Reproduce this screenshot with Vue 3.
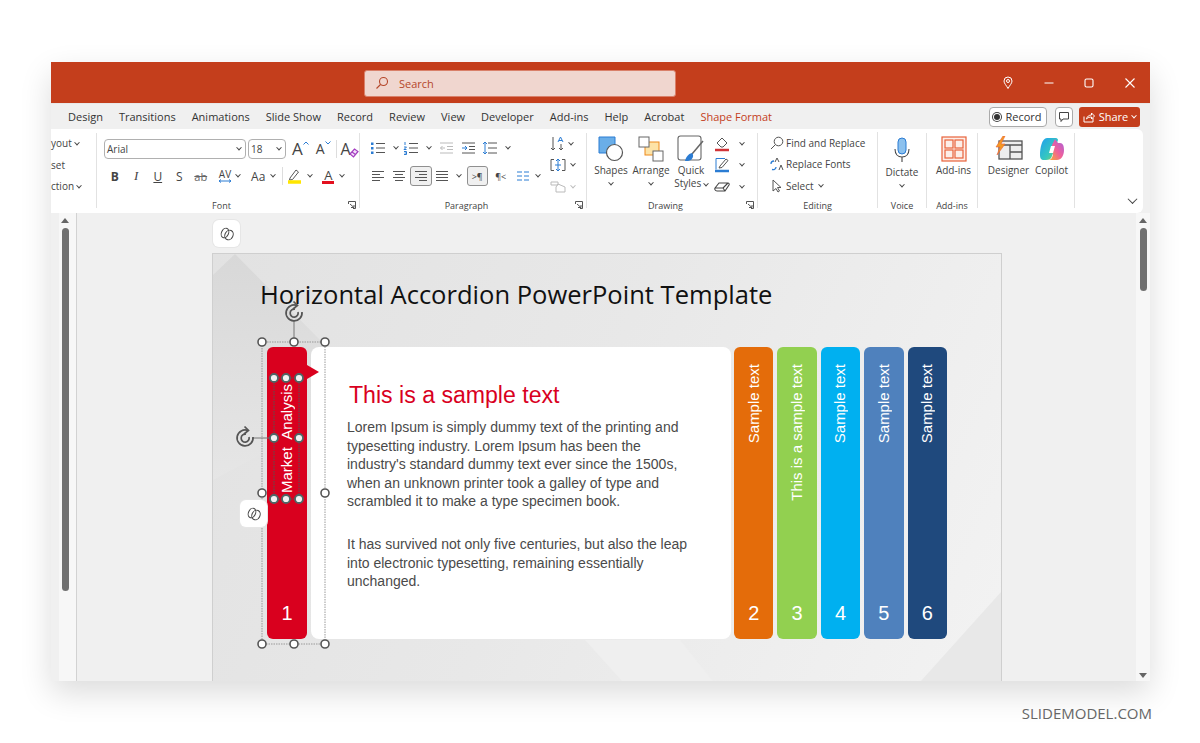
<template>
  <div class="page">
    <div class="window">
      <!-- title bar -->
      <div class="titlebar">
        <div class="search">
          <svg width="14" height="14" viewBox="0 0 14 14" fill="none" stroke="#b5462a" stroke-width="1.1"><circle cx="8.5" cy="5.5" r="4"/><path d="M5.5 8.5L1.5 12.5"/></svg>
          <span>Search</span>
        </div>
        <div class="win-btns">
          <svg width="12" height="14" viewBox="0 0 12 14" fill="none" stroke="#fff" stroke-width="1"><path d="M6 12.5C4.5 9.5 2 7.5 2 5a4 4 0 0 1 8 0c0 2.500-2.500 4.500-4 7.500z"/><circle cx="6" cy="5" r="1.500"/></svg>
          <svg width="12" height="14" viewBox="0 0 12 14" fill="none" stroke="#fff" stroke-width="1"><path d="M1.500 7h9"/></svg>
          <svg width="12" height="14" viewBox="0 0 12 14" fill="none" stroke="#fff" stroke-width="1.100"><rect x="2" y="3" width="8" height="8" rx="1.500"/></svg>
          <svg width="12" height="14" viewBox="0 0 12 14" fill="none" stroke="#fff" stroke-width="1.100"><path d="M1.500 2.500l9 9M10.500 2.500l-9 9"/></svg>
        </div>
      </div>

      <!-- tabs -->
      <div class="tabs">
        <span v-for="t in tabs" :key="t" class="tab" :class="{ 'tab-red': t === 'Shape Format' }">{{ t }}</span>
        <div class="tab-actions">
          <div class="rec-btn"><span class="rec-dot"></span>Record</div>
          <div class="cmt-btn">
            <svg width="12" height="12" viewBox="0 0 12 12" fill="none" stroke="#444" stroke-width="1"><path d="M1.500 1.500h9v6.500H5L3 10.500V8H1.500z"/></svg>
          </div>
          <div class="share-btn">
            <svg width="12" height="12" viewBox="0 0 12 12" fill="none" stroke="#fff" stroke-width="1"><path d="M1 5.500v5.500h9V7M3.500 8c.5-2.500 2.500-4 5-4V2l3 3-3 3V6c-2 0-3.500 .5-5 2z"/></svg>
            <span>Share</span>
            <i class="chev chev-w"></i>
          </div>
        </div>
      </div>

      <!-- ribbon -->
      <div class="ribbon">
        <!-- slides (clipped) -->
        <div class="group g-slides">
          <div class="clip-row">yout <i class="chev"></i></div>
          <div class="clip-row">set</div>
          <div class="clip-row">ction <i class="chev"></i></div>
        </div>

        <!-- font -->
        <div class="group g-font">
          <div class="row row-font1">
            <div class="combo combo-font"><span>Arial</span><i class="chev"></i></div>
            <div class="combo combo-size"><span>18</span><i class="chev"></i></div>
            <span class="grow-a g1">A<svg width="6" height="4" viewBox="0 0 6 4" fill="none" stroke="#2b7cd3" stroke-width="1"><path d="M.5 3.500L3 1l2.500 2.500"/></svg></span>
            <span class="grow-a g2">A<svg width="6" height="4" viewBox="0 0 6 4" fill="none" stroke="#2b7cd3" stroke-width="1"><path d="M.5 .5L3 3l2.500-2.500"/></svg></span>
            <span class="vbar v1"></span>
            <span class="clear-a">A<svg width="10" height="10" viewBox="0 0 10 10" fill="#f2dff8" stroke="#a43ec0" stroke-width="1.200"><path d="M1 6l4.500-5L9 3.500 4.500 9z"/><path d="M3 4l3.500 2.500" fill="none"/></svg></span>
          </div>
          <div class="row row-font2">
            <span class="t w21 bold">B</span>
            <span class="t w21 ital">I</span>
            <span class="t w21 und">U</span>
            <span class="t w21">S</span>
            <span class="t w21 strike">ab</span>
            <span class="t w35 av"><span class="av-in">AV<svg width="14" height="4" viewBox="0 0 14 4" fill="none" stroke="#2b7cd3" stroke-width="1"><path d="M1 2h12M3 .5L1 2l2 1.500M11 .5L13 2l-2 1.500"/></svg></span><i class="chev"></i></span>
            <span class="t w34">Aa<i class="chev"></i></span>
            <span class="vbar v2"></span>
            <span class="t w34">
              <svg width="15" height="16" viewBox="0 0 15 16" fill="none" stroke="#555"><path d="M3 10l6-8 2.500 2-6 7.500-3 .5z"/><path d="M1 14h13" stroke="#ffe600" stroke-width="3.500"/></svg>
              <i class="chev"></i>
            </span>
            <span class="t w34">
              <span class="a-red">A</span>
              <i class="chev"></i>
            </span>
          </div>
          <div class="glabel glabel-l">Font</div>
          <svg class="launcher" width="8" height="8" viewBox="0 0 8 8" fill="none" stroke="#555"><path d="M.5 3V.5H7.500V7.500H5M2 3l4 3.500M3 6.500h3V4"/></svg>
        </div>

        <!-- paragraph -->
        <div class="group g-para">
          <div class="para-left">
            <div class="row row-p1">
              <span class="t w33">
                <svg class="ic" width="16" height="14" viewBox="0 0 16 14"><path d="M6 2.500h9M6 7h9M6 11.500h9"/><path class="blue-f" d="M1 1.500h2.500v2.500H1zM1 6h2.500v2.500H1zM1 10.500h2.500V13H1z"/></svg>
                <i class="chev"></i>
              </span>
              <span class="t w33">
                <svg class="ic" width="16" height="14" viewBox="0 0 16 14"><path d="M6 2.500h9M6 7h9M6 11.500h9"/><path class="blue-s" d="M2 1v3M1 6h2.500L1 8.500h2.500M1 10.500h2.500v3H1M1.500 12h2"/></svg>
                <i class="chev"></i>
              </span>
              <span class="t w21 ml3">
                <svg class="ic faded" width="15" height="14" viewBox="0 0 15 14"><path d="M1 2h13M8 5.500h6M8 8.500h6M1 12h13M6 7H1.500M3.500 5L1.500 7l2 2"/></svg>
              </span>
              <span class="t w21">
                <svg class="ic" width="15" height="14" viewBox="0 0 15 14"><path d="M1 2h13M8 5.500h6M8 8.500h6M1 12h13"/><path class="blue-s" d="M1 7h5M4 5l2 2-2 2"/></svg>
              </span>
              <span class="t w33">
                <svg class="ic" width="16" height="14" viewBox="0 0 16 14"><path d="M6 2h9M6 7h9M6 12h9"/><path class="blue-s" d="M3 1v12M1 3l2-2 2 2M1 11l2 2 2-2"/></svg>
                <i class="chev"></i>
              </span>
            </div>
            <div class="row row-p2">
              <span class="t w22"><svg class="ic" width="14" height="12" viewBox="0 0 14 12"><path d="M1 1.500h12M1 4.500h8M1 7.500h12M1 10.500h8"/></svg></span>
              <span class="t w21"><svg class="ic" width="14" height="12" viewBox="0 0 14 12"><path d="M1 1.500h12M3 4.500h8M1 7.500h12M3 10.500h8"/></svg></span>
              <span class="t w22 on"><svg class="ic" width="14" height="12" viewBox="0 0 14 12"><path d="M1 1.500h12M5 4.500h8M1 7.500h12M5 10.500h8"/></svg></span>
              <span class="t w33"><svg class="ic" width="14" height="12" viewBox="0 0 14 12"><path d="M1 1.500h12M1 4.500h12M1 7.500h12M1 10.500h12"/></svg><i class="chev"></i></span>
              <span class="t w22 on ml2 pil">&gt;¶</span>
              <span class="t w22 pil ml2">¶&lt;</span>
              <span class="t w34">
                <svg class="ic" width="14" height="10" viewBox="0 0 14 10"><path class="blue-s" d="M1 1h5M1 5h5M1 9h5M8 1h5M8 5h5M8 9h5"/></svg>
                <i class="chev"></i>
              </span>
            </div>
          </div>
          <div class="para-right">
            <div class="t side">
              <svg class="ic" width="14" height="16" viewBox="0 0 14 16"><path d="M3 1v13M1 12l2 2 2-2M11 8v6M9 12l2 2 2-2"/><path class="blue-s" d="M8 6l2.500-5L13 6M9 4.500h3"/></svg>
              <i class="chev"></i>
            </div>
            <div class="t side">
              <svg class="ic" width="16" height="14" viewBox="0 0 16 14"><path d="M4 1.500H1v11h3M12 1.500h3v11h-3"/><path class="blue-s" d="M8 1v12M6 3l2-2 2 2M6 11l2 2 2-2M5 7h6"/></svg>
              <i class="chev"></i>
            </div>
            <div class="t side">
              <svg class="ic faded" width="16" height="14" viewBox="0 0 16 14"><path d="M1 2h7v3H1zM8 4l7 3v5H6V7z"/></svg>
              <i class="chev faded-c"></i>
            </div>
          </div>
          <div class="glabel glabel-l">Paragraph</div>
          <svg class="launcher" width="8" height="8" viewBox="0 0 8 8" fill="none" stroke="#555"><path d="M.5 3V.5H7.500V7.500H5M2 3l4 3.500M3 6.500h3V4"/></svg>
        </div>

        <!-- drawing -->
        <div class="group g-draw">
          <div class="big">
            <div class="big-ic">
              <svg width="26" height="26" viewBox="0 0 26 26" fill="none"><path d="M1 1h16v16H1z" fill="#6aaee8" stroke="#2b7cd3"/><circle cx="16.500" cy="16.500" r="8" fill="#fff" stroke="#555" stroke-width="1.200"/></svg>
            </div>
            <div class="big-l">Shapes</div>
            <i class="chev big-c"></i>
          </div>
          <div class="big">
            <div class="big-ic">
              <svg width="26" height="26" viewBox="0 0 26 26" fill="none"><rect x="7" y="6" width="14" height="13" fill="#fde3a7" stroke="#ee8a1d"/><rect x="1" y="1" width="10" height="10" fill="#fff" stroke="#666"/><rect x="15" y="15" width="10" height="10" fill="#fff" stroke="#666"/></svg>
            </div>
            <div class="big-l">Arrange</div>
            <i class="chev big-c"></i>
          </div>
          <div class="big">
            <div class="big-ic">
              <svg width="28" height="28" viewBox="0 0 28 28" fill="none"><rect x="1" y="1" width="23" height="24" rx="2.500" fill="#fff" stroke="#666" stroke-width="1.100"/><path d="M15 19L26 6" stroke="#666" stroke-width="1.500"/><path d="M8 26c1-4 3-7 7-8 2 2 1 5-1 7-2 1-4 1-6 1z" fill="#2b7cd3"/></svg>
            </div>
            <div class="big-l">Quick</div>
            <div class="big-l">Styles <i class="chev"></i></div>
          </div>
          <div class="draw-col">
            <div class="t dr">
              <svg width="16" height="16" viewBox="0 0 16 16" fill="none" stroke="#555"><path d="M3 7l5-5 5 5-4 4H7z"/><path d="M1 14h14" stroke="#d13438" stroke-width="2.500"/></svg>
              <i class="chev"></i>
            </div>
            <div class="t dr">
              <svg width="16" height="16" viewBox="0 0 16 16" fill="none" stroke="#2b7cd3"><path d="M2 1.500h9M2 1.500v11"/><path d="M6 9l6-7 2 1.500-6 7-3 .5z" stroke="#555"/><path d="M1 14h14" stroke-width="2.500"/></svg>
              <i class="chev"></i>
            </div>
            <div class="t dr">
              <svg width="16" height="14" viewBox="0 0 16 14" fill="none" stroke="#444" stroke-width="1.100"><path d="M1 8l4-5h9c1 0 1.500 1 1 2l-4 6H3c-2 0-2.500-2-2-3zM1 8h8l2 3M9 8l5-5"/></svg>
              <i class="chev"></i>
            </div>
          </div>
          <div class="glabel glabel-l">Drawing</div>
          <svg class="launcher" width="8" height="8" viewBox="0 0 8 8" fill="none" stroke="#555"><path d="M.5 3V.5H7.500V7.500H5M2 3l4 3.500M3 6.500h3V4"/></svg>
        </div>

        <!-- editing -->
        <div class="group g-edit">
          <div class="edit-row">
            <svg class="ic" width="14" height="14" viewBox="0 0 14 14"><circle cx="8.500" cy="5.500" r="4.300"/><path d="M5.500 8.500L1 13"/></svg>
            <span>Find and Replace</span>
          </div>
          <div class="edit-row">
            <svg width="14" height="14" viewBox="0 0 14 14" fill="none"><path d="M1 7c0-2 1.500-3 3-3M6 10c0 2-2 3-4 2.500" stroke="#2b7cd3" stroke-width="1.300"/><path d="M5 5l2-4 2 4M9 13l2-5 2 5" stroke="#555"/></svg>
            <span>Replace Fonts</span>
          </div>
          <div class="edit-row">
            <svg class="ic" width="14" height="14" viewBox="0 0 14 14"><path d="M3 1v11l3-2.500 2 3.500 1.500-1-2-3.500H11z"/></svg>
            <span>Select</span><i class="chev"></i>
          </div>
          <div class="glabel">Editing</div>
        </div>

        <!-- voice -->
        <div class="group g-voice">
          <div class="big big-full">
            <div class="big-ic big-ic-tall">
              <svg width="18" height="26" viewBox="0 0 18 26" fill="none"><rect x="5" y="1" width="8" height="16" rx="4" fill="#8cc1ee" stroke="#2b7cd3"/><path d="M2 12c0 5 3 8 7 8s7-3 7-8M9 20v5" stroke="#444" stroke-width="1.100"/></svg>
            </div>
            <div class="big-l">Dictate</div>
            <i class="chev big-c"></i>
          </div>
          <div class="glabel">Voice</div>
        </div>

        <!-- add-ins -->
        <div class="group g-addins">
          <div class="big big-full">
            <div class="big-ic">
              <svg width="26" height="26" viewBox="0 0 26 26" fill="#fdeee8" stroke="#e8623a" stroke-width="1.200"><rect x="1" y="1" width="24" height="24"/><rect x="4" y="4" width="8" height="8"/><rect x="14" y="4" width="8" height="8"/><rect x="4" y="14" width="8" height="8"/><rect x="14" y="14" width="8" height="8"/></svg>
            </div>
            <div class="big-l">Add-ins</div>
          </div>
          <div class="glabel">Add-ins</div>
        </div>

        <!-- designer / copilot -->
        <div class="group g-ai">
          <div class="big ai-b">
            <div class="big-ic">
              <svg width="28" height="26" viewBox="0 0 28 26" fill="none"><rect x="4" y="5" width="23" height="18" fill="#eee" stroke="#555" stroke-width="1.300"/><path d="M4 9h23M15 9v14M15 16h12" stroke="#555" stroke-width="1.300"/><path d="M8 0L1 11h4l-3 8 8-11H6l4-8z" fill="#f59a23" stroke="#e8623a" stroke-width=".6"/></svg>
            </div>
            <div class="big-l">Designer</div>
          </div>
          <div class="big ai-b">
            <div class="big-ic">
              <svg width="26" height="24" viewBox="0 0 26 24" fill="none">
                <defs>
                  <linearGradient id="cp1" x1="0" y1="0" x2="1" y2="1"><stop offset="0" stop-color="#1f9ff0"/><stop offset=".6" stop-color="#35c7c0"/><stop offset="1" stop-color="#9ad44a"/></linearGradient>
                  <linearGradient id="cp2" x1="0" y1="1" x2="1" y2="0"><stop offset="0" stop-color="#f7b32b"/><stop offset=".5" stop-color="#f0609a"/><stop offset="1" stop-color="#a45fe0"/></linearGradient>
                </defs>
                <path d="M8 1h9c1 0 2 1 2 2l-6 16c-1 3-3 4-6 4H5c-3 0-4-2-4-5 0-7 2-17 7-17z" fill="url(#cp1)"/>
                <path d="M13 8l3-6c1 1 2 3 3 4h2c3 0 4 3 4 7 0 6-3 10-7 10H9c3 0 4-2 5-5z" fill="url(#cp2)"/>
                <path d="M12 9h4l-2 7h-4z" fill="#fff"/>
              </svg>
            </div>
            <div class="big-l">Copilot</div>
          </div>
        </div>

        <div class="collapse"><i class="chev chev-lg"></i></div>
      </div>

      <!-- workspace -->
      <div class="workspace">
        <div class="left-pane">
          <div class="track">
            <i class="arrow-up"></i>
            <div class="thumb thumb-l"></div>
          </div>
        </div>

        <div class="canvas">
          <div class="copilot-btn top-btn">
            <svg width="14" height="14" viewBox="0 0 14 14" fill="none" stroke="#444" stroke-width="1"><ellipse cx="5" cy="6" rx="3.500" ry="5" transform="rotate(25 5 6)"/><ellipse cx="9" cy="8" rx="4" ry="5" transform="rotate(25 9 8)"/></svg>
          </div>

          <div class="slide">
            <svg class="slide-bg" viewBox="213 254 788 450" width="788" height="450">
              <defs>
                <linearGradient id="peak" x1="0" y1="0" x2="0" y2="1"><stop offset="0" stop-color="#d8d8d8"/><stop offset="1" stop-color="#e6e6e6"/></linearGradient>
              </defs>
              <path d="M213 275L235 254L325 345L325 420L213 480z" fill="url(#peak)"/>
              <path d="M1001 592L921 681V704H1001z" fill="#e8e8e8"/>
              <path d="M585 640L630 690H720L680 640z" fill="#efefef"/>
            </svg>

            <h1 class="slide-title">Horizontal Accordion PowerPoint Template</h1>

            <div class="accordion">
              <div class="bar bar-red">
                <span class="bar-text bar-text-sel">Market Analysis</span>
                <span class="bar-num">1</span>
                <i class="flag"></i>
              </div>

              <div class="panel">
                <h2>This is a sample text</h2>
                <p>Lorem Ipsum is simply dummy text of the printing and typesetting industry. Lorem Ipsum has been the industry's standard dummy text ever since the 1500s, when an unknown printer took a galley of type and scrambled it to make a type specimen book.</p>
                <p>It has survived not only five centuries, but also the leap into electronic typesetting, remaining essentially unchanged.</p>
              </div>

              <div class="bars">
                <div v-for="b in bars" :key="b.num" class="bar" :class="b.cls">
                  <span class="bar-text">{{ b.text }}</span>
                  <span class="bar-num">{{ b.num }}</span>
                </div>
              </div>
            </div>

            <!-- selection handles, page coordinates -->
            <svg class="selection" viewBox="213 254 788 450" width="788" height="450">
              <g fill="none" stroke="#999" stroke-width="1" stroke-dasharray="1.500 1">
                <rect x="262" y="342" width="63" height="302"/>
                <rect x="274" y="378" width="25" height="121" stroke="#555"/>
              </g>
              <path d="M294 321V342M253 438H274" stroke="#777" fill="none"/>
              <g fill="#fff" stroke="#555" stroke-width="1.600">
                <circle v-for="h in frameHandles" :key="h.join()" :cx="h[0]" :cy="h[1]" r="4"/>
              </g>
              <g fill="#f2f2f2" stroke="#4d6666" stroke-width="1.800">
                <circle v-for="h in textHandles" :key="h.join()" :cx="h[0]" :cy="h[1]" r="4"/>
              </g>
              <g v-for="r in rotators" :key="r.join()" :transform="`translate(${r[0]} ${r[1]})`" fill="none" stroke="#555" stroke-width="1.700">
                <path d="M8 -1A8 8 0 1 1 3 -7.500"/>
                <path d="M4 -1A4 4 0 1 1 1 -3.800"/>
                <path d="M-.5 -11.500L3.500 -7.500L-1 -4"/>
              </g>
            </svg>

            <div class="copilot-btn side-btn">
              <svg width="14" height="14" viewBox="0 0 14 14" fill="none" stroke="#444" stroke-width="1"><ellipse cx="5" cy="6" rx="3.500" ry="5" transform="rotate(25 5 6)"/><ellipse cx="9" cy="8" rx="4" ry="5" transform="rotate(25 9 8)"/></svg>
            </div>
          </div>
        </div>

        <div class="right-pane">
          <i class="arrow-up"></i>
          <div class="thumb thumb-r"></div>
          <i class="arrow-down"></i>
        </div>
      </div>
    </div>

    <div class="watermark">SLIDEMODEL.COM</div>
  </div>
</template>

<script setup>
const tabs = ['Design', 'Transitions', 'Animations', 'Slide Show', 'Record', 'Review', 'View', 'Developer', 'Add-ins', 'Help', 'Acrobat', 'Shape Format']

const bars = [
  { num: 2, text: 'Sample text', cls: 'bar-orange' },
  { num: 3, text: 'This is a sample text', cls: 'bar-green' },
  { num: 4, text: 'Sample text', cls: 'bar-cyan' },
  { num: 5, text: 'Sample text', cls: 'bar-blue' },
  { num: 6, text: 'Sample text', cls: 'bar-navy' }
]

const frameHandles = [[262, 342], [294, 342], [325, 342], [262, 493], [325, 493], [262, 644], [294, 644], [325, 644]]
const textHandles = [[274, 378], [286, 378], [299, 378], [274, 438], [299, 438], [274, 499], [286, 499], [299, 499]]
const rotators = [[294, 313], [245, 438]]
</script>

<style>
html, body {
  margin: 0;
  background: #fff;
}
</style>

<style scoped>
.page {
  width: 1200px;
  height: 743px;
  padding: 62px 0 0 51px;
  box-sizing: border-box;
  overflow: hidden;
  font-family: "Open Sans", "Liberation Sans", sans-serif;
  color: #444;
}

.window {
  width: 1099px;
  height: 619px;
  display: flex;
  flex-direction: column;
  background: #f0f0f0;
  box-shadow: 0 12px 30px rgba(0, 0, 0, 0.14);
}

/* title bar */
.titlebar {
  height: 42px;
  flex: none;
  background: #c43e1c;
  display: flex;
  align-items: center;
  padding-left: 313px;
  border-bottom: 1px solid #e8e8e8;
  box-sizing: border-box;
}
.search {
  width: 312px;
  height: 27px;
  margin-top: 1px;
  box-sizing: border-box;
  background: #f0d6cf;
  border: 1px solid #d9806a;
  border-radius: 3px;
  display: flex;
  align-items: center;
  gap: 10px;
  padding-left: 10px;
  font-size: 11px;
  color: #b5462a;
}
.win-btns {
  margin-left: auto;
  width: 134px;
  margin-right: 14px;
  display: flex;
  justify-content: space-between;
}

/* tabs */
.tabs {
  height: 25px;
  flex: none;
  display: flex;
  align-items: center;
  padding-left: 17px;
  gap: 16px;
  font-size: 11px;
  color: #333;
  background: #f0f0f0;
}
.tab {
  white-space: nowrap;
}
.tab-red {
  color: #c43e1c;
}
.tab-actions {
  margin-left: auto;
  margin-right: 10px;
  display: flex;
  align-items: center;
  gap: 8px;
}
.rec-btn {
  width: 58px;
  height: 20px;
  box-sizing: border-box;
  border: 1px solid #aaa;
  border-radius: 4px;
  background: #fff;
  display: flex;
  align-items: center;
  justify-content: center;
  gap: 3px;
  font-size: 11px;
}
.rec-dot {
  width: 6px;
  height: 6px;
  background: #333;
  border-radius: 50%;
  box-shadow: 0 0 0 1px #fff, 0 0 0 2px #444;
  margin-right: 2px;
}
.cmt-btn {
  width: 18px;
  height: 20px;
  box-sizing: border-box;
  border: 1px solid #aaa;
  border-radius: 4px;
  background: #fff;
  display: flex;
  align-items: center;
  justify-content: center;
}
.share-btn {
  width: 61px;
  height: 20px;
  margin-left: -2px;
  border-radius: 3px;
  background: #c43e1c;
  color: #fff;
  font-size: 11px;
  display: flex;
  align-items: center;
  justify-content: center;
  gap: 4px;
}

/* ribbon */
.ribbon {
  height: 84px;
  flex: none;
  width: 1092px;
  background: #fff;
  border-radius: 0 6px 6px 0;
  display: flex;
  padding: 4px 0 5px;
  box-sizing: border-box;
  position: relative;
  font-size: 10px;
}
.group {
  position: relative;
  box-sizing: border-box;
  border-right: 1px solid #e2e2e2;
  flex: none;
}
.glabel {
  position: absolute;
  left: 0;
  right: 0;
  bottom: -4px;
  text-align: center;
  font-size: 9px;
  line-height: 12px;
  color: #444;
}
.glabel-l {
  right: 13px;
}
.launcher {
  position: absolute;
  right: 3px;
  bottom: -1px;
}
.chev {
  display: inline-block;
  width: 4px;
  height: 4px;
  flex: none;
  box-sizing: border-box;
  border-right: 1px solid #444;
  border-bottom: 1px solid #444;
  transform: rotate(45deg) translate(-1px, -1px);
}
.chev-w {
  border-color: #fff;
}
.chev-lg {
  width: 7px;
  height: 7px;
}
.faded-c {
  border-color: #bbb;
}
.row {
  display: flex;
  align-items: center;
}
.t {
  display: inline-flex;
  align-items: center;
  justify-content: center;
  gap: 4px;
  height: 20px;
  flex: none;
  box-sizing: border-box;
  font-size: 12px;
}
.w21 { width: 21.5px; }
.w22 { width: 21.5px; }
.w33 { width: 33px; gap: 8px; }
.w34 { width: 33.5px; gap: 6px; }
.w35 { width: 35px; }
.ml2 { margin-left: 2px; }
.ml3 { margin-left: 3px; }
.on {
  background: #f0f0f0;
  border: 1px solid #8f8f8f;
  border-radius: 3px;
}
.bold { font-weight: 700; }
.ital { font-style: italic; font-family: "Liberation Serif", serif; font-size: 13px; }
.und { text-decoration: underline; }
.strike { text-decoration: line-through; color: #666; font-size: 11px; }
.av { font-size: 10px; }
.av-in {
  display: flex;
  flex-direction: column;
  align-items: center;
  line-height: 9px;
}
.a-red {
  display: inline-block;
  font-size: 13px;
  line-height: 12px;
  border-bottom: 3px solid #e3101f;
  padding: 0 2px;
}
.pil { font-size: 9px; color: #444; }
.ic {
  fill: none;
  stroke: #555;
  stroke-width: 1;
}
.faded { stroke: #bbb; }
.blue-f { fill: #2b7cd3; stroke: none; }
.blue-s { stroke: #2b7cd3; }

/* slides group, cut off at the left */
.g-slides {
  width: 46px;
  font-size: 10px;
}
.clip-row {
  height: 21.5px;
  line-height: 17px;
  display: flex;
  align-items: center;
  gap: 3px;
}

/* font group */
.g-font {
  width: 263px;
  padding-left: 7px;
}
.row-font1 {
  margin-top: 6px;
  height: 20px;
}
.combo {
  height: 20px;
  box-sizing: border-box;
  border: 1px solid #b0b0b0;
  border-radius: 4px;
  display: flex;
  align-items: center;
  justify-content: space-between;
  padding: 0 4px 0 2px;
  font-size: 10px;
}
.combo-font { width: 142px; }
.combo-size { width: 38px; margin-left: 2px; }
.grow-a {
  display: inline-flex;
  align-items: flex-start;
  font-size: 17px;
  line-height: 20px;
}
.grow-a svg { margin-top: 2px; }
.g1 { margin-left: 6px; }
.g2 { margin-left: 7px; font-size: 14px; }
.vbar {
  width: 1px;
  background: #ddd;
  height: 18px;
  flex: none;
}
.v1 { margin-left: 5px; }
.clear-a {
  position: relative;
  margin-left: 4px;
  width: 18px;
  font-size: 16px;
  line-height: 20px;
}
.clear-a svg {
  position: absolute;
  right: 0;
  bottom: 1px;
}
.row-font2 {
  margin-top: 7px;
}
.v2 { margin: 0 0 0 2px; }

/* paragraph group */
.g-para {
  width: 227px;
  padding-left: 7px;
  display: flex;
}
.para-left { width: 178px; }
.row-p1 {
  margin-top: 5px;
}
.row-p2 {
  margin-top: 8px;
}
.para-right {
  margin-left: 5px;
  display: flex;
  flex-direction: column;
}
.side {
  height: 21.5px;
  justify-content: flex-start;
  gap: 5px;
}

/* large buttons */
.big {
  display: flex;
  flex-direction: column;
  align-items: center;
  flex: none;
  width: 40px;
}
.big-ic {
  height: 30px;
  margin-top: 1px;
  display: flex;
  align-items: center;
  justify-content: center;
}
.big-ic-tall {
  height: 31px;
  margin-bottom: 1px;
}
.big-l {
  line-height: 13px;
  font-size: 10px;
  white-space: nowrap;
}
.big-c {
  margin-top: 5px;
}
.big-full { width: 100%; }

.g-draw {
  width: 171px;
  padding-left: 4px;
  display: flex;
}
.draw-col {
  display: flex;
  flex-direction: column;
  padding-left: 3px;
}
.dr {
  height: 21.5px;
  justify-content: flex-start;
  gap: 10px;
}
.g-edit {
  width: 120px;
  padding-left: 12px;
  margin-top: -1px;
}
.edit-row {
  height: 21.5px;
  display: flex;
  align-items: center;
  gap: 2px;
  white-space: nowrap;
}
.edit-row .chev { margin-left: 3px; }
.g-voice { width: 49px; }
.g-addins { width: 51px; padding-left: 3px; }
.g-ai {
  width: 97px;
  padding-left: 10px;
  display: flex;
  gap: 2px;
}
.ai-b { width: 41px; }
.collapse {
  position: absolute;
  right: 7px;
  bottom: 6px;
}

/* workspace */
.workspace {
  flex: 1;
  min-height: 0;
  display: flex;
  background: #f0f0f0;
  overflow: hidden;
}
.left-pane {
  width: 26px;
  flex: none;
  box-sizing: border-box;
  padding-left: 8px;
  border-right: 1px solid #d2d2d2;
}
.track {
  height: 100%;
  background: #f7f7f7;
  display: flex;
  flex-direction: column;
  align-items: center;
  padding: 5px 5px 0 0;
  box-sizing: border-box;
}
.arrow-up, .arrow-down {
  width: 0;
  height: 0;
  border-left: 4px solid transparent;
  border-right: 4px solid transparent;
  flex: none;
}
.arrow-up { border-bottom: 5px solid #666; }
.arrow-down { border-top: 5px solid #666; margin-top: auto; margin-bottom: 3px; }
.thumb {
  width: 7px;
  background: #707070;
  border-radius: 4px;
  margin-top: 5px;
  flex: none;
}
.thumb-l { height: 363px; }
.thumb-r { height: 63px; }
.right-pane {
  width: 14px;
  flex: none;
  background: #f7f7f7;
  display: flex;
  flex-direction: column;
  align-items: center;
  padding-top: 5px;
  box-sizing: border-box;
}
.canvas {
  flex: 1;
  position: relative;
  padding: 40px 0 0 135px;
  overflow: hidden;
}
.copilot-btn {
  position: absolute;
  width: 27px;
  height: 27px;
  background: #fff;
  border-radius: 6px;
  display: flex;
  align-items: center;
  justify-content: center;
  box-shadow: 0 0 0 1px #e6e6e6;
}
.top-btn {
  left: 136px;
  top: 7px;
}
.side-btn {
  left: 27px;
  top: 246px;
}

/* slide */
.slide {
  position: relative;
  width: 790px;
  height: 452px;
  box-sizing: border-box;
  border: 1px solid #cfcfcf;
  background: linear-gradient(115deg, #e2e2e2 0%, #e8e8e8 45%, #f3f3f3 100%);
  padding: 22px 0 0 47px;
}
.slide-bg, .selection {
  position: absolute;
  left: 0;
  top: 0;
}
.selection {
  z-index: 2;
  pointer-events: none;
}
.side-btn { z-index: 3; }
.slide-title {
  position: relative;
  margin: 0;
  font-size: 25.55px;
  font-weight: 400;
  line-height: 36px;
  color: #111;
  white-space: nowrap;
}
.accordion {
  position: relative;
  display: flex;
  margin: 35px 0 0 7px;
  height: 292px;
}
.bar {
  position: relative;
  width: 39.4px;
  height: 292px;
  box-sizing: border-box;
  border-radius: 6px;
  color: #fff;
  display: flex;
  flex-direction: column;
  align-items: center;
  justify-content: space-between;
  padding: 17px 0 14px;
  font-family: "Liberation Sans", Arial, sans-serif;
}
.bar-text {
  writing-mode: vertical-rl;
  transform: rotate(180deg);
  font-size: 15px;
  line-height: 18px;
  white-space: nowrap;
}
.bar-text-sel {
  margin-top: 20px;
  word-spacing: 4px;
}
.bar-num {
  font-size: 20px;
  line-height: 23px;
}
.bar-red { background: #d9001e; width: 40px; flex: none; }
.bar-orange { background: #e46c0a; }
.bar-green { background: #92d050; }
.bar-cyan { background: #00b0f0; }
.bar-blue { background: #4f81bd; }
.bar-navy { background: #1f497d; }
.flag {
  position: absolute;
  left: 40px;
  top: 18px;
  width: 0;
  height: 0;
  border-left: 12px solid #d9001e;
  border-top: 7px solid transparent;
  border-bottom: 7px solid transparent;
}
.panel {
  width: 420px;
  height: 292px;
  margin-left: 4px;
  flex: none;
  box-sizing: border-box;
  background: #fff;
  border-radius: 8px;
  padding: 34px 36px 0 36px;
  font-family: "Liberation Sans", Arial, sans-serif;
  color: #4a4a4a;
}
.panel h2 {
  margin: 0 0 9px 2px;
  font-size: 23.1px;
  font-weight: 400;
  line-height: 28px;
  color: #d9001e;
}
.panel p {
  margin: 0 0 24.500px;
  font-size: 14px;
  line-height: 18.500px;
}
.bars {
  display: flex;
  gap: 4px;
  margin-left: 3px;
}

.watermark {
  width: 1101px;
  text-align: right;
  margin-top: 23px;
  font-size: 15px;
  line-height: 18px;
  color: #666;
}
</style>
